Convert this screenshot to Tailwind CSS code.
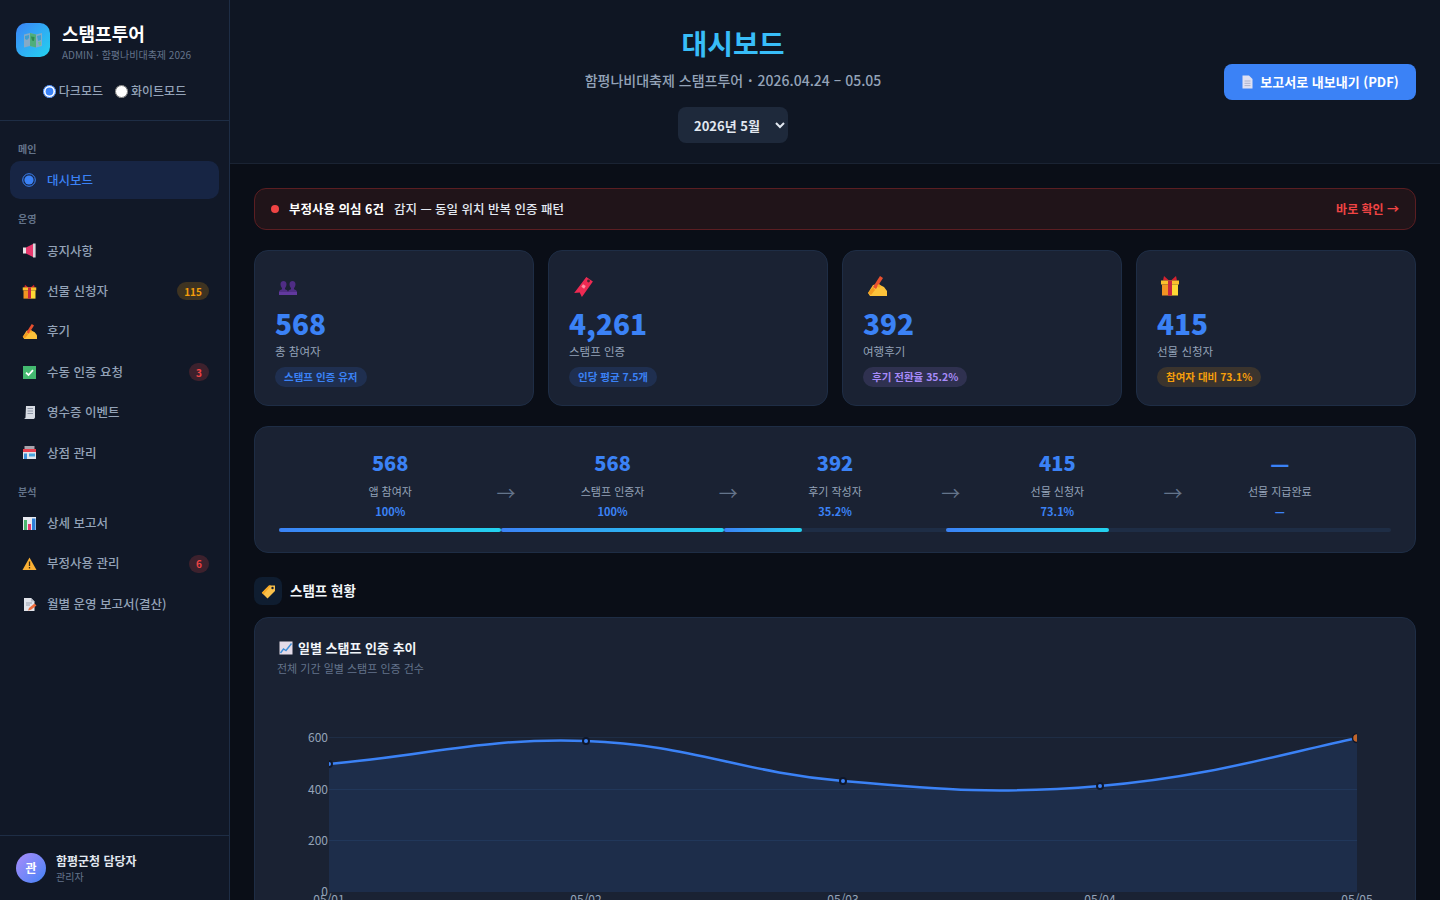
<!DOCTYPE html>
<html lang="ko">
<head>
    <meta charset="UTF-8">
    <meta name="viewport" content="width=device-width, initial-scale=1.0">
    <title>스탬프투어 대시보드</title>
    <script src="https://cdn.jsdelivr.net/npm/@tailwindcss/browser@4"></script>
</head>
<body class="bg-[#0a0e17] font-['Noto_Sans_CJK_KR','Noto_Sans',sans-serif] text-[#e2e8f0]">
<div class="flex h-[900px] w-[1440px] overflow-hidden">

    <!-- sidebar -->
    <aside class="flex h-full w-[230px] shrink-0 flex-col border-r border-[#1e2d45] bg-[#111827]">
        <div class="h-[121px] border-b border-[#1e2d45] px-4 pt-[22px]">
            <div class="flex items-start gap-3">
                <div class="mt-[1px] flex h-[34px] w-[34px] items-center justify-center rounded-[10px] bg-gradient-to-br from-[#3b82f6] to-[#22d3ee]">
                    <svg width="18" height="16" viewBox="0 0 18 16"><path d="M0 2.5 6 1 12 2.5 18 1V14L12 15.5 6 14 0 15.5Z" fill="#85aac6"/><path d="M6 1 12 2.5V15.5L6 14Z" fill="#4fae7a"/><path d="M1 4 5 3V6L3 8 1 7Z" fill="#3f9fd0"/><path d="M13 4 17 3V8L14 9Z" fill="#3f9fd0"/><path d="M7 4.5 10.5 5 10 9 8 8.5Z" fill="#2f8a4f"/><path d="M14 10 17 9.5V13L15 13.5Z" fill="#6cc08e"/></svg>
                </div>
                <div>
                    <div class="text-[18px] leading-[22px] font-bold text-white">스탬프투어</div>
                    <div class="mt-[4px] text-[10px] leading-[14px] text-[#64748b]">ADMIN · 함평나비대축제 2026</div>
                </div>
            </div>
            <div class="mt-[20px] flex items-center justify-center gap-3 text-[12px] leading-[18px] font-medium text-[#94a3b8]">
                <label class="flex items-center gap-[3px]"><input type="radio" name="mode" checked class="m-0 h-[13px] w-[13px] accent-[#3b82f6]">다크모드</label>
                <label class="flex items-center gap-[3px]"><input type="radio" name="mode" class="m-0 h-[13px] w-[13px]">화이트모드</label>
            </div>
        </div>

        <nav class="px-[10px] pt-[10px] text-[12.5px] font-medium text-[#94a3b8]">
            <div class="h-[30px] pt-[10px] pl-2 text-[10px] leading-4 font-bold text-[#64748b]">메인</div>
            <a class="mb-[2.4px] flex h-[38px] items-center gap-[10px] rounded-[10px] bg-[#172544] px-3 text-[#3b82f6]">
                <svg class="w-[14px] shrink-0" width="14" height="14" viewBox="0 0 14 14"><circle cx="7" cy="7" r="6.3" fill="none" stroke="#3b82f6" stroke-width="1"/><circle cx="7" cy="7" r="4.6" fill="#3b82f6"/></svg>
                <span class="ml-[1px]">대시보드</span>
            </a>
            <div class="h-[30.6px] pt-[10px] pl-2 text-[10px] leading-4 font-bold text-[#64748b]">운영</div>
            <a class="mb-[2.4px] flex h-[38px] items-center gap-[10px] px-3">
                <svg class="shrink-0" width="15" height="15" viewBox="0 0 15 15"><rect x="1" y="4.5" width="3" height="6" fill="#e8e3e6"/><path d="M4 4.5 11 1V14L4 10.5Z" fill="#e8386d"/><rect x="11" y="0.5" width="2.6" height="14" fill="#d9d4da"/></svg>
                공지사항</a>
            <a class="mb-[2.4px] flex h-[38px] items-center gap-[10px] px-3">
                <svg class="shrink-0" width="15" height="15" viewBox="0 0 20 20"><path d="M4 1 9 5H3ZM16 1 11 5H17Z" fill="#d3222f"/><rect x="1" y="4.5" width="18" height="4" fill="#fbc02d"/><rect x="2" y="8.5" width="8" height="11" fill="#f29422"/><rect x="10" y="8.5" width="8" height="11" fill="#fdd835"/><rect x="8" y="4.5" width="4" height="15" fill="#c9263f"/></svg>
                선물 신청자<span class="-mr-[2px] ml-auto flex h-[18px] w-[32px] items-center justify-center rounded-full bg-[#f59e0b]/20 text-[10px] font-bold text-[#f59e0b]">115</span></a>
            <a class="mb-[2.4px] flex h-[38px] items-center gap-[10px] px-3">
                <svg class="shrink-0" width="15" height="15" viewBox="0 0 20 20"><path d="M1 17 6 9 11 8 17 11 20 15V20H3Z" fill="#fcc23a"/><path d="M1 17 6 11 8 14 4 19Z" fill="#f39a1f"/><path d="M6 11 13 0 16 2 9 13Z" fill="#e8502f"/><path d="M12 8 14 10 12 12 10 10Z" fill="#f7a823"/></svg>
                후기</a>
            <a class="mb-[2.4px] flex h-[38px] items-center gap-[10px] px-3">
                <svg class="shrink-0" width="15" height="15" viewBox="0 0 15 15"><rect x="1" y="1" width="13" height="13" fill="#43b96f"/><path d="M4 7.6 6.5 10 11 5.2" fill="none" stroke="#fff" stroke-width="1.8"/></svg>
                수동 인증 요청<span class="-mr-[2px] ml-auto flex h-[18px] w-[20px] items-center justify-center rounded-full bg-[#ef4444]/20 text-[10px] font-bold text-[#ef4444]">3</span></a>
            <a class="mb-[2.4px] flex h-[38px] items-center gap-[10px] px-3">
                <svg class="shrink-0" width="15" height="15" viewBox="0 0 15 15"><path d="M4 1H13V12C13 13.5 12 14 11 14H2C3 13.5 3.5 13 3.5 12Z" fill="#d7dbe3"/><path d="M5.5 3.5H11M5.5 6H11M5.5 8.5H11" stroke="#8e96a6" stroke-width="1"/></svg>
                영수증 이벤트</a>
            <a class="mb-[2.4px] flex h-[38px] items-center gap-[10px] px-3">
                <svg class="shrink-0" width="15" height="15" viewBox="0 0 15 15"><rect x="2.5" y="1" width="10" height="3" fill="#a9a4ad"/><rect x="1" y="4" width="13" height="3" fill="#e8404f"/><rect x="1" y="7" width="13" height="7" fill="#dfe3ea"/><rect x="2" y="8.5" width="3" height="5.5" fill="#3d8fd6"/><rect x="7" y="8.5" width="6" height="3" fill="#4aa5dd"/></svg>
                상점 관리</a>
            <div class="h-[30px] pt-[10px] pl-2 text-[10px] leading-4 font-bold text-[#64748b]">분석</div>
            <a class="mb-[2.4px] flex h-[38px] items-center gap-[10px] px-3">
                <svg class="shrink-0" width="15" height="15" viewBox="0 0 15 15"><rect x="1" y="1" width="13" height="13" fill="#e8eaf0"/><rect x="2" y="4" width="3" height="10" fill="#4cb56f"/><rect x="6" y="8" width="3" height="6" fill="#e8386d"/><rect x="10" y="2.5" width="3.5" height="11.5" fill="#2f80d8"/></svg>
                상세 보고서</a>
            <a class="mb-[2.4px] flex h-[38px] items-center gap-[10px] px-3">
                <svg class="shrink-0" width="15" height="15" viewBox="0 0 15 15"><path d="M7.5 1.5 14.5 14H0.5Z" fill="#fbb034"/><path d="M7.5 5.5V10M7.5 11V12.5" stroke="#3d2c12" stroke-width="1.3"/></svg>
                부정사용 관리<span class="-mr-[2px] ml-auto flex h-[18px] w-[20px] items-center justify-center rounded-full bg-[#ef4444]/20 text-[10px] font-bold text-[#ef4444]">6</span></a>
            <a class="mb-[2.4px] flex h-[38px] items-center gap-[10px] px-3">
                <svg class="shrink-0" width="15" height="15" viewBox="0 0 15 15"><path d="M2 1H9L12.5 4.5V14H2Z" fill="#e1e3ea"/><path d="M9 1 12.5 4.5H9Z" fill="#b9bdc9"/><path d="M4 6H10M4 8H8" stroke="#9aa0ae" stroke-width="1"/><path d="M6 13.5 7 11 12.5 6.5 14.5 8.5 9 12.8Z" fill="#ee6a3a"/></svg>
                월별 운영 보고서(결산)</a>
        </nav>

        <div class="mt-auto flex h-[65px] items-center gap-[10px] border-t border-[#1e2d45] px-4">
            <div class="flex h-[30px] w-[30px] items-center justify-center rounded-full bg-gradient-to-br from-[#a78bfa] to-[#3b82f6] text-[12px] font-bold text-white">관</div>
            <div>
                <div class="text-[12px] leading-[17px] font-bold text-[#e2e8f0]">함평군청 담당자</div>
                <div class="text-[10px] leading-[15px] text-[#64748b]">관리자</div>
            </div>
        </div>
    </aside>

    <main class="h-full min-w-0 flex-1 overflow-hidden">
        <!-- header -->
        <header class="flex h-[164px] items-start gap-3 border-b border-[#1a2333] bg-[#0f1623] px-6">
            <div class="flex flex-1 flex-col items-center pt-[24px]">
                <h1 class="text-[28px] leading-[38px] font-bold text-[#38bdf8]">대시보드</h1>
                <p class="mt-[8px] text-[14px] leading-[20px] font-medium text-[#94a3b8]">함평나비대축제 스탬프투어 <span class="mx-[1px] font-bold">·</span> 2026.04.24 – 05.05</p>
                <select class="mt-[17px] h-[36px] w-[110px] rounded-lg bg-[#1e293b] pl-3 text-[13px] font-bold text-[#e2e8f0] [color-scheme:dark]">
                    <option>2026년 5월</option>
                </select>
            </div>
            <button class="mt-[64px] flex h-[36px] w-[192px] items-center justify-center gap-[6px] rounded-lg bg-[#3b82f6] text-[13px] font-bold text-white">
                <svg width="13" height="14" viewBox="0 0 13 14"><path d="M1.5 0.5H8L11.5 4V13.5H1.5Z" fill="#dfe0f2"/><path d="M3.5 6H9.5M3.5 8.3H9.5M3.5 10.6H9.5" stroke="#aeb3cb" stroke-width="1"/></svg>
                보고서로 내보내기 (PDF)</button>
        </header>

        <div class="px-6 pt-6">
            <!-- alert -->
            <div class="flex h-[42px] items-center rounded-xl border border-[#5b1e22] bg-[#201419] pr-4 pl-4 text-[12.5px]">
                <span class="mr-[10px] h-2 w-2 rounded-full bg-[#ef4444]"></span>
                <b class="mr-[10px] font-bold text-white">부정사용 의심 6건</b>
                <span class="font-medium text-[#e2e8f0]">감지 — 동일 위치 반복 인증 패턴</span>
                <span class="ml-auto text-[12px] font-bold text-[#ef4444]">바로 확인 →</span>
            </div>

            <!-- stat cards -->
            <div class="mt-5 grid grid-cols-4 gap-[14px]">
                <div class="h-[156px] rounded-[14px] border border-[#1e2d45] bg-[#1a2233] px-5 pt-[25px]">
                    <svg class="ml-[3px] block" width="20" height="20" viewBox="0 0 20 20"><g fill="#4f2d85"><path d="M1 19V16C1 14.5 2.5 14 4 13.3V12C3 11 2.5 9.5 2.5 8 2.5 6 4 5 5.5 5S8.5 6 8.5 8C8.5 9.5 8 11 7 12V13.3C8.5 14 10 14.5 10 16V19Z"/><path d="M10 19V16C10 14.5 11.5 14 13 13.3V12C12 11 11.5 9.5 11.5 8 11.5 6 13 5 14.5 5S17.5 6 17.5 8C17.5 9.5 17 11 16 12V13.3C17.5 14 19 14.5 19 16V19Z"/></g><path d="M1 16H19V19H1Z" fill="#6a3fa8" opacity="0.7"/></svg>
                    <div class="mt-[9px] text-[28px] leading-[36px] font-black text-[#3b82f6]">568</div>
                    <div class="mt-[2px] text-[11.5px] leading-[16px] text-[#94a3b8]">총 참여자</div>
                    <span class="mt-[8px] flex h-[20px] w-fit items-center rounded-full bg-[#3b82f6]/15 px-[9px] text-[10.5px] font-bold text-[#3b82f6]">스탬프 인증 유저</span>
                </div>
                <div class="h-[156px] rounded-[14px] border border-[#1e2d45] bg-[#1a2233] px-5 pt-[25px]">
                    <svg class="ml-[3px] block" width="22" height="22" viewBox="0 0 20 20"><path d="M13 1 19 5 9 19 7 15 2 15.5Z" fill="#ee2a52"/><circle cx="15" cy="4.5" r="1.3" fill="#4a2530"/><path d="M10 7.5 12.5 9.2 11 11.5 8.5 9.8Z" fill="#ff8fa3"/></svg>
                    <div class="mt-[7px] text-[28px] leading-[36px] font-black text-[#3b82f6]">4,261</div>
                    <div class="mt-[2px] text-[11.5px] leading-[16px] text-[#94a3b8]">스탬프 인증</div>
                    <span class="mt-[8px] flex h-[20px] w-fit items-center rounded-full bg-[#3b82f6]/15 px-[9px] text-[10.5px] font-bold text-[#3b82f6]">인당 평균 7.5개</span>
                </div>
                <div class="h-[156px] rounded-[14px] border border-[#1e2d45] bg-[#1a2233] px-5 pt-[25px]">
                    <svg class="ml-[3px] block" width="22" height="20" viewBox="0 0 20 20"><path d="M1 17 6 9 11 8 17 11 20 15V20H3Z" fill="#fcc23a"/><path d="M1 17 6 11 8 14 4 19Z" fill="#f39a1f"/><path d="M6 11 13 0 16 2 9 13Z" fill="#e8502f"/><path d="M12 8 14 10 12 12 10 10Z" fill="#f7a823"/></svg>
                    <div class="mt-[9px] text-[28px] leading-[36px] font-black text-[#3b82f6]">392</div>
                    <div class="mt-[2px] text-[11.5px] leading-[16px] text-[#94a3b8]">여행후기</div>
                    <span class="mt-[8px] flex h-[20px] w-fit items-center rounded-full bg-[#a78bfa]/15 px-[9px] text-[10.5px] font-bold text-[#a78bfa]">후기 전환율 35.2%</span>
                </div>
                <div class="h-[156px] rounded-[14px] border border-[#1e2d45] bg-[#1a2233] px-5 pt-[25px]">
                    <svg class="ml-[3px] block" width="20" height="20" viewBox="0 0 20 20"><path d="M4 0 9 4.5H3ZM16 0 11 4.5H17Z" fill="#d3222f"/><rect x="1" y="4.5" width="18" height="4" fill="#fbc02d"/><rect x="2" y="8.5" width="8" height="11" fill="#f29422"/><rect x="10" y="8.5" width="8" height="11" fill="#fdd835"/><rect x="8" y="4.5" width="4" height="15" fill="#c9263f"/></svg>
                    <div class="mt-[9px] text-[28px] leading-[36px] font-black text-[#3b82f6]">415</div>
                    <div class="mt-[2px] text-[11.5px] leading-[16px] text-[#94a3b8]">선물 신청자</div>
                    <span class="mt-[8px] flex h-[20px] w-fit items-center rounded-full bg-[#f59e0b]/15 px-[9px] text-[10.5px] font-bold text-[#f59e0b]">참여자 대비 73.1%</span>
                </div>
            </div>

            <!-- funnel -->
            <div class="mt-5 grid h-[127px] grid-cols-5 rounded-[14px] border border-[#1e2d45] bg-[#1a2233] px-6 pt-[21px]">
                <div class="relative flex flex-col items-center">
                    <div class="text-[20px] leading-[30px] font-black text-[#3b82f6]">568</div>
                    <div class="mt-[5px] text-[11px] leading-[16px] text-[#94a3b8]">앱 참여자</div>
                    <div class="mt-[4px] text-[11px] leading-[16px] font-bold text-[#3b82f6]">100%</div>
                    <div class="mt-[9px] h-1 w-full bg-[#1e2d45]"><div class="h-full rounded-full bg-gradient-to-r from-[#3b82f6] to-[#22d3ee]" style="width:100%"></div></div>
                    <span class="absolute top-[32px] -right-[14px] text-[19px] leading-[26px] text-[#64748b]">→</span>
                </div>
                <div class="relative flex flex-col items-center">
                    <div class="text-[20px] leading-[30px] font-black text-[#3b82f6]">568</div>
                    <div class="mt-[5px] text-[11px] leading-[16px] text-[#94a3b8]">스탬프 인증자</div>
                    <div class="mt-[4px] text-[11px] leading-[16px] font-bold text-[#3b82f6]">100%</div>
                    <div class="mt-[9px] h-1 w-full bg-[#1e2d45]"><div class="h-full rounded-full bg-gradient-to-r from-[#3b82f6] to-[#22d3ee]" style="width:100%"></div></div>
                    <span class="absolute top-[32px] -right-[14px] text-[19px] leading-[26px] text-[#64748b]">→</span>
                </div>
                <div class="relative flex flex-col items-center">
                    <div class="text-[20px] leading-[30px] font-black text-[#3b82f6]">392</div>
                    <div class="mt-[5px] text-[11px] leading-[16px] text-[#94a3b8]">후기 작성자</div>
                    <div class="mt-[4px] text-[11px] leading-[16px] font-bold text-[#3b82f6]">35.2%</div>
                    <div class="mt-[9px] h-1 w-full bg-[#1e2d45]"><div class="h-full rounded-full bg-gradient-to-r from-[#3b82f6] to-[#22d3ee]" style="width:35.2%"></div></div>
                    <span class="absolute top-[32px] -right-[14px] text-[19px] leading-[26px] text-[#64748b]">→</span>
                </div>
                <div class="relative flex flex-col items-center">
                    <div class="text-[20px] leading-[30px] font-black text-[#3b82f6]">415</div>
                    <div class="mt-[5px] text-[11px] leading-[16px] text-[#94a3b8]">선물 신청자</div>
                    <div class="mt-[4px] text-[11px] leading-[16px] font-bold text-[#3b82f6]">73.1%</div>
                    <div class="mt-[9px] h-1 w-full bg-[#1e2d45]"><div class="h-full rounded-full bg-gradient-to-r from-[#3b82f6] to-[#22d3ee]" style="width:73.1%"></div></div>
                    <span class="absolute top-[32px] -right-[14px] text-[19px] leading-[26px] text-[#64748b]">→</span>
                </div>
                <div class="relative flex flex-col items-center">
                    <div class="text-[21px] leading-[30px] font-black text-[#3b82f6]">—</div>
                    <div class="mt-[5px] text-[11px] leading-[16px] text-[#94a3b8]">선물 지급완료</div>
                    <div class="mt-[4px] text-[11px] leading-[16px] font-black text-[#3b82f6]">—</div>
                    <div class="mt-[9px] h-1 w-full rounded-r-full bg-[#1e2d45]"></div>
                </div>
            </div>

            <!-- section title -->
            <div class="mt-6 flex items-center gap-2">
                <div class="flex h-7 w-7 items-center justify-center rounded-lg bg-[#0f1d30]">
                    <svg width="15" height="15" viewBox="0 0 15 15"><path d="M8 1.5 14 1.5 14 7 6.5 14.5 0.8 8.8Z" fill="#f9c04a"/><path d="M8 1.5 10 1.5 2.5 10.5 0.8 8.8Z" fill="#f5a623"/><circle cx="11.5" cy="4" r="1.2" fill="#0f1d30"/></svg>
                </div>
                <h2 class="-mt-[2px] text-[13.5px] leading-5 font-bold text-[#f1f5f9]">스탬프 현황</h2>
            </div>

            <!-- chart card -->
            <div class="mt-3 rounded-[14px] border border-[#1e2d45] bg-[#1a2233] px-[22px] pt-[20px] pb-6">
                <div class="flex items-center gap-[5px] pl-[2px] text-[13px] leading-[20px] font-bold text-[#f1f5f9]">
                    <svg width="14" height="14" viewBox="0 0 14 14"><rect x="0.5" y="0.5" width="13" height="13" fill="#e4dbe8"/><path d="M1.5 12 4.5 8 7 9.5 12.5 2.5" fill="none" stroke="#3f8fd8" stroke-width="1.4"/></svg>
                    일별 스탬프 인증 추이</div>
                <div class="text-[11px] leading-[20px] text-[#64748b]">전체 기간 일별 스탬프 인증 건수</div>
                <svg class="mt-[2px] block w-full" width="1116" height="240" viewBox="277 680 1116 240">
                    <defs><clipPath id="plot"><rect x="329" y="730" width="1028" height="162"/></clipPath></defs>
                    <g stroke="#1e2d45" stroke-width="1">
                        <line x1="329" x2="1357" y1="737.5" y2="737.5"/>
                        <line x1="329" x2="1357" y1="789.5" y2="789.5"/>
                        <line x1="329" x2="1357" y1="840.5" y2="840.5"/>
                    </g>
                    <g clip-path="url(#plot)">
                        <path fill="#3b82f6" fill-opacity="0.12" d="M329 764C431.8 754.8 483.6 737.6 586 741C689.2 744.4 739.6 772 843 781C945.3 790 998.1 794.5 1100 786C1203.7 777.3 1270 757 1357 738L1357 892L329 892Z"/>
                        <path fill="none" stroke="#3b82f6" stroke-width="2.5" d="M329 764C431.8 754.8 483.6 737.6 586 741C689.2 744.4 739.6 772 843 781C945.3 790 998.1 794.5 1100 786C1203.7 777.3 1270 757 1357 738"/>
                        <g fill="#3b82f6" stroke="#0f172a" stroke-width="2">
                            <circle cx="329" cy="764" r="3"/>
                            <circle cx="586" cy="741" r="3"/>
                            <circle cx="843" cy="781" r="3"/>
                            <circle cx="1100" cy="786" r="3"/>
                        </g>
                        <circle cx="1357" cy="738" r="4.5" fill="#c2652b" stroke="#0f172a" stroke-width="1.5"/>
                    </g>
                    <g fill="#94a3b8" font-size="12" text-anchor="end">
                        <text x="328" y="742">600</text>
                        <text x="328" y="794">400</text>
                        <text x="328" y="845">200</text>
                        <text x="328" y="896">0</text>
                    </g>
                    <g fill="#94a3b8" font-size="12" text-anchor="middle">
                        <text x="329" y="904">05/01</text>
                        <text x="586" y="904">05/02</text>
                        <text x="843" y="904">05/03</text>
                        <text x="1100" y="904">05/04</text>
                        <text x="1357" y="904">05/05</text>
                    </g>
                </svg>
            </div>
        </div>
    </main>
</div>
</body>
</html>
